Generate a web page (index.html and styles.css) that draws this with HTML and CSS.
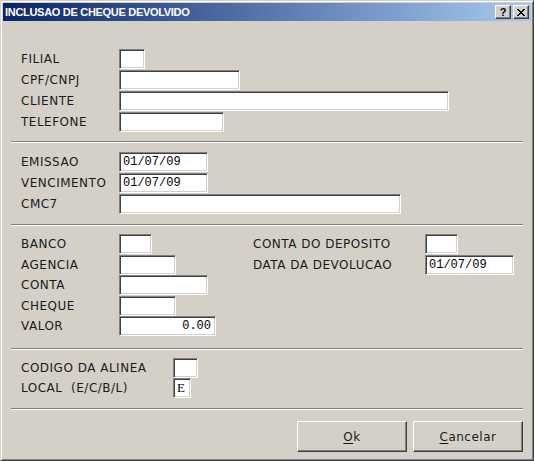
FILE: index.html
```html
<!DOCTYPE html>
<html lang="pt">
<head>
<meta charset="utf-8">
<title>Inclusao de Cheque Devolvido</title>
<link rel="stylesheet" href="styles.css">
</head>
<body>
<div class="window">
  <div class="titlebar">
    <span class="title">INCLUSAO DE CHEQUE DEVOLVIDO</span>
    <div class="tbtns">
      <span class="tbtn tbtn-help">?</span>
      <span class="tbtn"><svg width="8" height="7" viewBox="0 0 8 7"><path d="M0 0h2v1h1v1h2v-1h1v-1h2v1h-1v1h-1v1h-1v1h1v1h1v1h1v1h-2v-1h-1v-1h-2v1h-1v1h-2v-1h1v-1h1v-1h1v-1h-1v-1h-1v-1h-1z" fill="#000"/></svg></span>
    </div>
  </div>
  <div class="content">
    <section class="group g1">
      <div class="field"><span class="label">FILIAL</span><span class="input w26"></span></div>
      <div class="field"><span class="label">CPF/CNPJ</span><span class="input w121"></span></div>
      <div class="field"><span class="label">CLIENTE</span><span class="input w330"></span></div>
      <div class="field"><span class="label">TELEFONE</span><span class="input w105"></span></div>
    </section>
    <div class="sep"></div>
    <section class="group g2">
      <div class="field"><span class="label">EMISSAO</span><span class="input w89">01/07/09</span></div>
      <div class="field"><span class="label">VENCIMENTO</span><span class="input w89">01/07/09</span></div>
      <div class="field"><span class="label">CMC7</span><span class="input w282"></span></div>
    </section>
    <div class="sep"></div>
    <section class="group g3">
      <div class="col col-left">
        <div class="field"><span class="label">BANCO</span><span class="input w33"></span></div>
        <div class="field"><span class="label">AGENCIA</span><span class="input w57"></span></div>
        <div class="field"><span class="label">CONTA</span><span class="input w89"></span></div>
        <div class="field"><span class="label">CHEQUE</span><span class="input w57"></span></div>
        <div class="field"><span class="label">VALOR</span><span class="input w97 num">0.00</span></div>
      </div>
      <div class="col col-right">
        <div class="field"><span class="label label-wide">CONTA DO DEPOSITO</span><span class="input w33"></span></div>
        <div class="field"><span class="label label-wide">DATA DA DEVOLUCAO</span><span class="input w89">01/07/09</span></div>
      </div>
    </section>
    <div class="sep"></div>
    <section class="group g4">
      <div class="field"><span class="label label-long">CODIGO DA ALINEA</span><span class="input w25"></span></div>
      <div class="field"><span class="label label-long">LOCAL&nbsp; (E/C/B/L)</span><span class="input w18 serif">E</span></div>
    </section>
    <div class="sep"></div>
    <div class="actions">
      <button class="btn"><u>O</u>k</button>
      <button class="btn"><u>C</u>ancelar</button>
    </div>
  </div>
</div>
</body>
</html>
```

FILE: styles.css
```css
html, body {
  margin: 0;
  padding: 0;
  background: #d4d0c8;
}

.window {
  width: 534px;
  height: 461px;
  box-sizing: border-box;
  background: #d4d0c8;
  border: 1px solid;
  border-color: #d4d0c8 #404040 #404040 #d4d0c8;
  box-shadow: inset 1px 1px #ffffff, inset -1px -1px #808080;
  padding: 2px;
  font-family: "DejaVu Sans", "Liberation Sans", sans-serif;
  font-size: 12px;
  letter-spacing: 0.5px;
  color: #1a1a1a;
}

.titlebar {
  height: 18px;
  display: flex;
  align-items: center;
  justify-content: space-between;
  background: linear-gradient(to right, #0a246a, #a6caf0);
  padding: 0 2px 0 2px;
}

.title {
  color: #fff;
  font-family: "Liberation Sans", Arial, sans-serif;
  font-weight: bold;
  font-size: 11px;
  letter-spacing: -0.3px;
  line-height: 18px;
}

.tbtns {
  display: flex;
  gap: 2px;
}

.tbtn {
  width: 16px;
  height: 14px;
  box-sizing: border-box;
  display: flex;
  align-items: center;
  justify-content: center;
  background: #d4d0c8;
  border: 1px solid;
  border-color: #ffffff #404040 #404040 #ffffff;
  box-shadow: inset -1px -1px #808080;
  font-family: "Liberation Sans", Arial, sans-serif;
  font-weight: bold;
  font-size: 11px;
  letter-spacing: 0;
  line-height: 12px;
  color: #000;
}

.tbtn svg {
  display: block;
}

.content {
  padding: 0 8px;
}

.group {
  display: flex;
  flex-direction: column;
  padding-left: 10px;
}

.g1 { padding-top: 28px; padding-bottom: 9px; gap: 1px; }
.g2 { padding-top: 9px; padding-bottom: 10px; gap: 1px; }
.g3 { padding-top: 8px; padding-bottom: 12px; flex-direction: row; }
.g4 { padding-top: 8px; padding-bottom: 10px; gap: 0; }

.col {
  display: flex;
  flex-direction: column;
  gap: 0.5px;
}

.col-left { width: 232px; }

.field {
  display: flex;
  align-items: center;
  height: 20px;
}

.label {
  width: 98px;
  flex: none;
  white-space: nowrap;
}

.label-wide { width: 172px; }
.label-long { width: 152px; }

.sep {
  height: 1px;
  background: #808080;
  border-bottom: 1px solid #ffffff;
}

.input {
  height: 20px;
  box-sizing: border-box;
  background: #fff;
  border: 1px solid;
  border-color: #808080 #ffffff #ffffff #808080;
  box-shadow: inset 1px 1px #404040, inset -1px -1px #d4d0c8;
  padding: 0 4px 0 3px;
  font-family: "Liberation Mono", "Courier New", monospace;
  font-size: 12px;
  letter-spacing: 0;
  line-height: 18px;
  white-space: nowrap;
  color: #000;
}

.num { text-align: right; }

.serif {
  padding-left: 3px;
  font-family: "Liberation Serif", "Times New Roman", serif;
  font-size: 13px;
}

.w18 { width: 18px; }
.w25 { width: 25px; }
.w26 { width: 26px; }
.w33 { width: 33px; }
.w57 { width: 57px; }
.w89 { width: 89px; }
.w97 { width: 97px; }
.w105 { width: 105px; }
.w121 { width: 121px; }
.w282 { width: 282px; }
.w330 { width: 330px; }

.actions {
  display: flex;
  justify-content: flex-end;
  gap: 6px;
  padding-top: 11px;
}

.btn {
  width: 110px;
  height: 31px;
  box-sizing: border-box;
  background: #d4d0c8;
  border: 1px solid;
  border-color: #ffffff #404040 #404040 #ffffff;
  box-shadow: inset -1px -1px #808080;
  font-family: "DejaVu Sans", "Liberation Sans", sans-serif;
  font-size: 12px;
  letter-spacing: 0.5px;
  color: #1a1a1a;
  padding: 0;
}

.btn u {
  text-decoration-thickness: 1px;
  text-underline-offset: 2px;
}
```
